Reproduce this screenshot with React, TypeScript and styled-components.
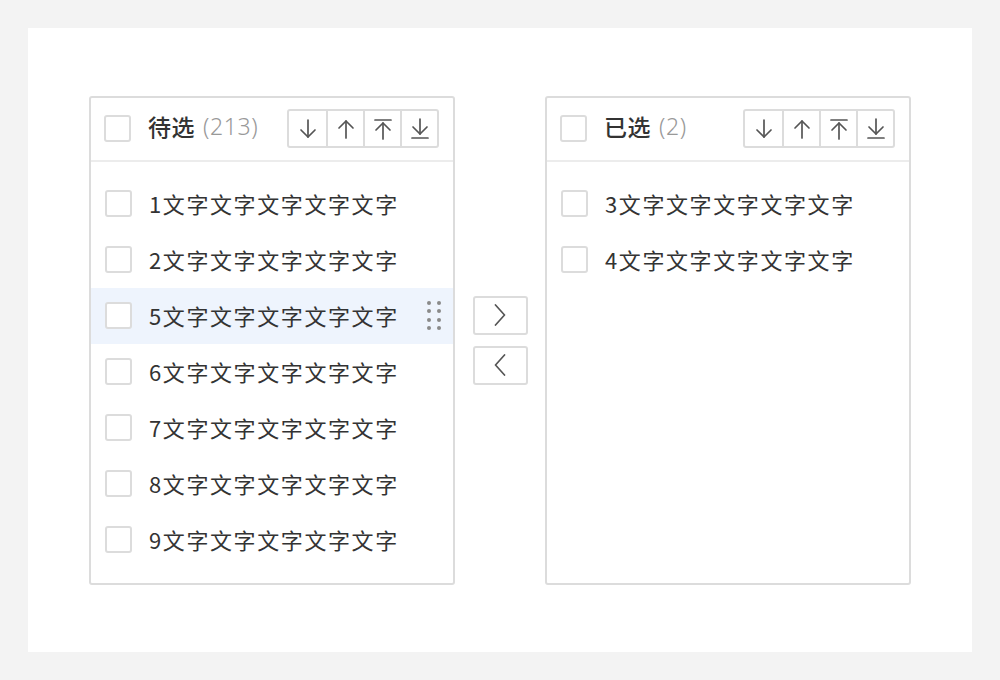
import React from "react";
import styled, { createGlobalStyle } from "styled-components";

const Global = createGlobalStyle`
  html, body { margin: 0; padding: 0; background: #f3f3f3; }
  body { font-family: "Noto Sans CJK SC", "Noto Sans", sans-serif; }
  * { box-sizing: border-box; }
`;

const Page = styled.div`
  width: 1000px;
  height: 680px;
  padding: 28px;
  background: #f3f3f3;
`;

const Card = styled.div`
  width: 944px;
  height: 624px;
  background: #ffffff;
  display: flex;
  align-items: center;
  justify-content: center;
`;

const Panel = styled.div`
  width: 366px;
  height: 489px;
  border: 2px solid #dcdcdc;
  border-radius: 3px;
  display: flex;
  flex-direction: column;
`;

const Header = styled.div`
  height: 64px;
  flex: none;
  display: flex;
  align-items: center;
  padding: 0 14px 0 13px;
  border-bottom: 2px solid #ececec;
`;

const Check = styled.span`
  width: 27px;
  height: 27px;
  flex: none;
  border: 2px solid #dcdcdc;
  border-radius: 3px;
  background: #fff;
`;

const Title = styled.span`
  margin-left: 17px;
  font-size: 23px;
  line-height: 1;
  font-weight: 500;
  color: #333;
  letter-spacing: 0.5px;
  margin-top: -4px;
`;

const Count = styled.span`
  margin-left: 8px;
  font-family: "Noto Sans", sans-serif;
  font-size: 23px;
  line-height: 1;
  color: #999;
  font-weight: 300;
  letter-spacing: 0.6px;
  margin-top: -4px;
`;

const Tools = styled.div`
  margin-left: auto;
  display: flex;
  height: 39px;
  border: 2px solid #dcdcdc;
  border-radius: 3px;
`;

const ToolButton = styled.button`
  width: 37px;
  height: 100%;
  border: none;
  background: transparent;
  padding: 0;
  display: flex;
  align-items: center;
  justify-content: center;
  & + & { border-left: 2px solid #dcdcdc; }
`;

const List = styled.div`
  padding: 14px 0;
  display: flex;
  flex-direction: column;
`;

const Row = styled.div<{ $active?: boolean }>`
  height: 56px;
  display: flex;
  align-items: center;
  padding: 0 14px;
  background: ${(p) => (p.$active ? "#eef4fd" : "transparent")};
`;

const RowText = styled.span`
  margin-left: 17px;
  font-size: 22px;
  line-height: 1;
  margin-top: -2px;
  color: #333;
  letter-spacing: 1.6px;
  white-space: nowrap;
`;

const Handle = styled.span`
  margin-left: auto;
  margin-right: -2px;
  display: grid;
  grid-template-columns: 4px 4px;
  column-gap: 6px;
  row-gap: 4.5px;
  & > i {
    width: 4px;
    height: 4px;
    border-radius: 50%;
    background: #8a8a8a;
  }
`;

const Middle = styled.div`
  width: 90px;
  display: flex;
  flex-direction: column;
  align-items: center;
  gap: 11px;
`;

const MoveButton = styled.button`
  width: 55px;
  height: 39px;
  border: 2px solid #dcdcdc;
  border-radius: 3px;
  background: #fff;
  padding: 0;
  display: flex;
  align-items: center;
  justify-content: center;
`;

const stroke = { stroke: "#555", strokeWidth: 1.7, fill: "none", strokeLinecap: "round" as const, strokeLinejoin: "round" as const };

const Down = () => (
  <svg width="20" height="22" viewBox="0 0 20 22">
    <line x1="10" y1="2" x2="10" y2="19" {...stroke} />
    <polyline points="3,12 10,19 17,12" {...stroke} />
  </svg>
);
const Up = () => (
  <svg width="20" height="22" viewBox="0 0 20 22">
    <line x1="10" y1="3" x2="10" y2="20" {...stroke} />
    <polyline points="3,10 10,3 17,10" {...stroke} />
  </svg>
);
const Top = () => (
  <svg width="20" height="22" viewBox="0 0 20 22">
    <line x1="2" y1="2" x2="18" y2="2" {...stroke} />
    <line x1="10" y1="5" x2="10" y2="21" {...stroke} />
    <polyline points="3,12 10,5 17,12" {...stroke} />
  </svg>
);
const Bottom = () => (
  <svg width="20" height="22" viewBox="0 0 20 22">
    <line x1="10" y1="1" x2="10" y2="16" {...stroke} />
    <polyline points="3,9 10,16 17,9" {...stroke} />
    <line x1="2" y1="20" x2="18" y2="20" {...stroke} />
  </svg>
);
const ChevronRight = () => (
  <svg width="12" height="22" viewBox="0 0 12 22">
    <polyline points="1.5,1 10.5,11 1.5,21" {...stroke} />
  </svg>
);
const ChevronLeft = () => (
  <svg width="12" height="22" viewBox="0 0 12 22">
    <polyline points="10.5,1 1.5,11 10.5,21" {...stroke} />
  </svg>
);

const Toolbar = () => (
  <Tools>
    <ToolButton><Down /></ToolButton>
    <ToolButton><Up /></ToolButton>
    <ToolButton><Top /></ToolButton>
    <ToolButton><Bottom /></ToolButton>
  </Tools>
);

const leftItems = ["1", "2", "5", "6", "7", "8", "9"];
const rightItems = ["3", "4"];

export default function App() {
  return (
    <>
      <Global />
      <Page>
        <Card>
          <Panel>
            <Header>
              <Check />
              <Title>待选</Title>
              <Count>(213)</Count>
              <Toolbar />
            </Header>
            <List>
              {leftItems.map((n) => (
                <Row key={n} $active={n === "5"}>
                  <Check />
                  <RowText>{n}文字文字文字文字文字</RowText>
                  {n === "5" && (
                    <Handle>
                      {Array.from({ length: 8 }).map((_, i) => (
                        <i key={i} />
                      ))}
                    </Handle>
                  )}
                </Row>
              ))}
            </List>
          </Panel>
          <Middle>
            <MoveButton><ChevronRight /></MoveButton>
            <MoveButton><ChevronLeft /></MoveButton>
          </Middle>
          <Panel>
            <Header>
              <Check />
              <Title>已选</Title>
              <Count>(2)</Count>
              <Toolbar />
            </Header>
            <List>
              {rightItems.map((n) => (
                <Row key={n}>
                  <Check />
                  <RowText>{n}文字文字文字文字文字</RowText>
                </Row>
              ))}
            </List>
          </Panel>
        </Card>
      </Page>
    </>
  );
}
